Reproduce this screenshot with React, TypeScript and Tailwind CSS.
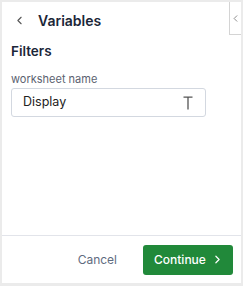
import { ChevronLeft, ChevronRight } from 'lucide-react'

export default function App() {
  return (
    <div
      className="w-[243px] h-[286px] bg-[#ebebeb] pt-[2px] pl-[2px] pr-[2px] pb-[3px]"
      style={{ fontFamily: 'Inter, "Liberation Sans", sans-serif' }}
    >
      <div className="relative h-full bg-white flex flex-col">
        {/* collapse tab */}
        <div className="absolute right-0 top-0 w-[12px] h-[33px] border-l border-b border-[#d4d4d4] bg-white flex items-center justify-center">
          <ChevronLeft className="w-[11px] h-[11px] text-[#666]" strokeWidth={1.6} />
        </div>

        {/* Header */}
        <div className="flex items-center h-[36px] pl-[11px]">
          <ChevronLeft className="w-[13px] h-[13px] text-[#555]" strokeWidth={2} />
          <span className="ml-[12px] text-[14px] font-semibold text-[#1b2638]">Variables</span>
        </div>

        {/* Body */}
        <div className="flex-1 px-[9px] pt-[4px]">
          <div className="text-[13.5px] font-semibold text-[#1b2638] leading-[18px]">Filters</div>
          <div className="mt-[12px] text-[11px] text-[#5b6270] leading-[14px]">worksheet name</div>
          <div className="mt-[2px] w-[195px] h-[29px] border border-[#d3d8e0] rounded-[3px] flex items-center justify-between pl-[11px] pr-[12px]">
            <span className="text-[12.5px] text-[#222]">Display</span>
            <svg width="10" height="14" viewBox="0 0 10 14" fill="none" stroke="#555" strokeWidth="1.3">
              <path d="M0.5 1.2H9.5M5 1.2V13.5" />
            </svg>
          </div>
        </div>

        {/* Footer */}
        <div className="border-t border-[#e2e4ea] h-[48px] flex items-center justify-end pr-[8px]">
          <span className="text-[12px] text-[#5f6b80] mr-[26px]">Cancel</span>
          <button
            type="button"
            className="w-[90px] h-[30px] bg-[#21893a] rounded-[3px] flex items-center justify-between pl-[11px] pr-[9px] text-white text-[12px] font-medium"
          >
            <span>Continue</span>
            <ChevronRight className="w-[13px] h-[13px]" strokeWidth={2.2} />
          </button>
        </div>
      </div>
    </div>
  )
}
